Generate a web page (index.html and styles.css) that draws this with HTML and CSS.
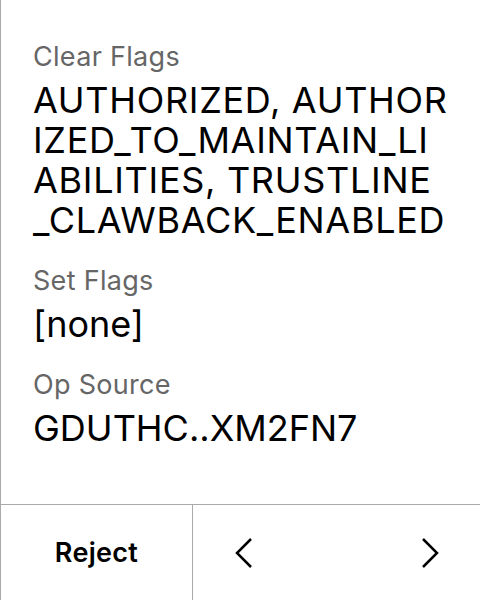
FILE: index.html
```html
<!DOCTYPE html>
<html>
<head>
<meta charset="utf-8">
<link rel="stylesheet" href="styles.css">
</head>
<body>
<div class="screen">
  <div class="content">
    <div class="field">
      <div class="label">Clear Flags</div>
      <div class="value value-wide">AUTHORIZED, AUTHORIZED_TO_MAINTAIN_LIABILITIES, TRUSTLINE_CLAWBACK_ENABLED</div>
    </div>
    <div class="field">
      <div class="label">Set Flags</div>
      <div class="value">[none]</div>
    </div>
    <div class="field">
      <div class="label">Op Source</div>
      <div class="value">GDUTHC..XM2FN7</div>
    </div>
  </div>
  <div class="footer">
    <div class="reject">Reject</div>
    <div class="nav">
      <svg class="chev" width="18" height="32" viewBox="0 0 18 32"><polyline points="16,2 2,16 16,30" fill="none" stroke="#000" stroke-width="2.5"/></svg>
      <svg class="chev" width="18" height="32" viewBox="0 0 18 32"><polyline points="2,2 16,16 2,30" fill="none" stroke="#000" stroke-width="2.5"/></svg>
    </div>
  </div>
</div>
</body>
</html>
```
FILE: styles.css
```css
html, body {
  margin: 0;
  padding: 0;
  background: #fff;
}
body {
  font-family: Inter, "Noto Sans", sans-serif;
  color: #000;
}
.screen {
  width: 479px;
  height: 600px;
  border-left: 1px solid #aaa;
  display: flex;
  flex-direction: column;
}
.content {
  flex: 1;
  padding: 41px 32px 0 32px;
  display: flex;
  flex-direction: column;
  gap: 25px;
}
.field {
  display: flex;
  flex-direction: column;
  gap: 7px;
}
.label {
  font-size: 27px;
  line-height: 32px;
  letter-spacing: 0.3px;
  color: #666;
}
.value {
  font-size: 36px;
  line-height: 40px;
  word-break: break-all;
}
.value-wide {
  letter-spacing: 0.7px;
}
.footer {
  height: 95px;
  border-top: 1px solid #aaa;
  display: flex;
}
.reject {
  width: 191px;
  border-right: 1px solid #aaa;
  display: flex;
  align-items: center;
  justify-content: center;
  font-size: 27px;
  font-weight: 600;
  letter-spacing: 0.3px;
}
.nav {
  flex: 1;
  display: flex;
  align-items: center;
  justify-content: space-between;
  padding: 0 41px 0 42px;
}
```
